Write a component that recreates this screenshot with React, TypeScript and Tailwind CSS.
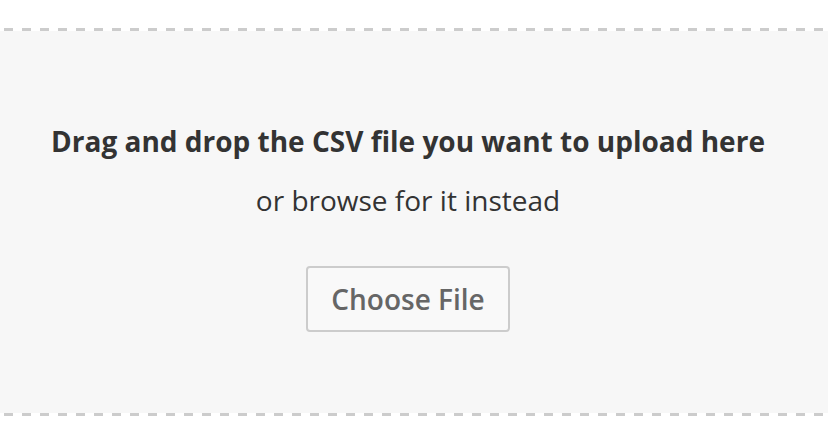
const dashes =
  'h-[3px] bg-[repeating-linear-gradient(90deg,#cccccc_0px,#cccccc_9px,transparent_9px,transparent_18px)] bg-[position:4px_0]';

export default function App() {
  return (
    <div className="min-h-[444px] bg-white pt-7" style={{ fontFamily: '"Open Sans", sans-serif' }}>
      <div className={dashes} />
      <div className="flex h-[382px] flex-col items-center bg-[#f7f7f7] pt-[92px] pr-3 text-[#333333]">
        <h2 className="text-[28px] font-bold leading-[36px]">Drag and drop the CSV file you want to upload here</h2>
        <p className="mt-[23px] text-[28px] leading-[36px]">or browse for it instead</p>
        <button className="mt-[48px] h-[66px] w-[204px] rounded-[4px] border-2 border-[#cccccc] bg-[#f9f9f9] text-[28px] font-semibold leading-[36px] text-[#666666]">
          Choose File
        </button>
      </div>
      <div className={dashes} />
    </div>
  );
}
